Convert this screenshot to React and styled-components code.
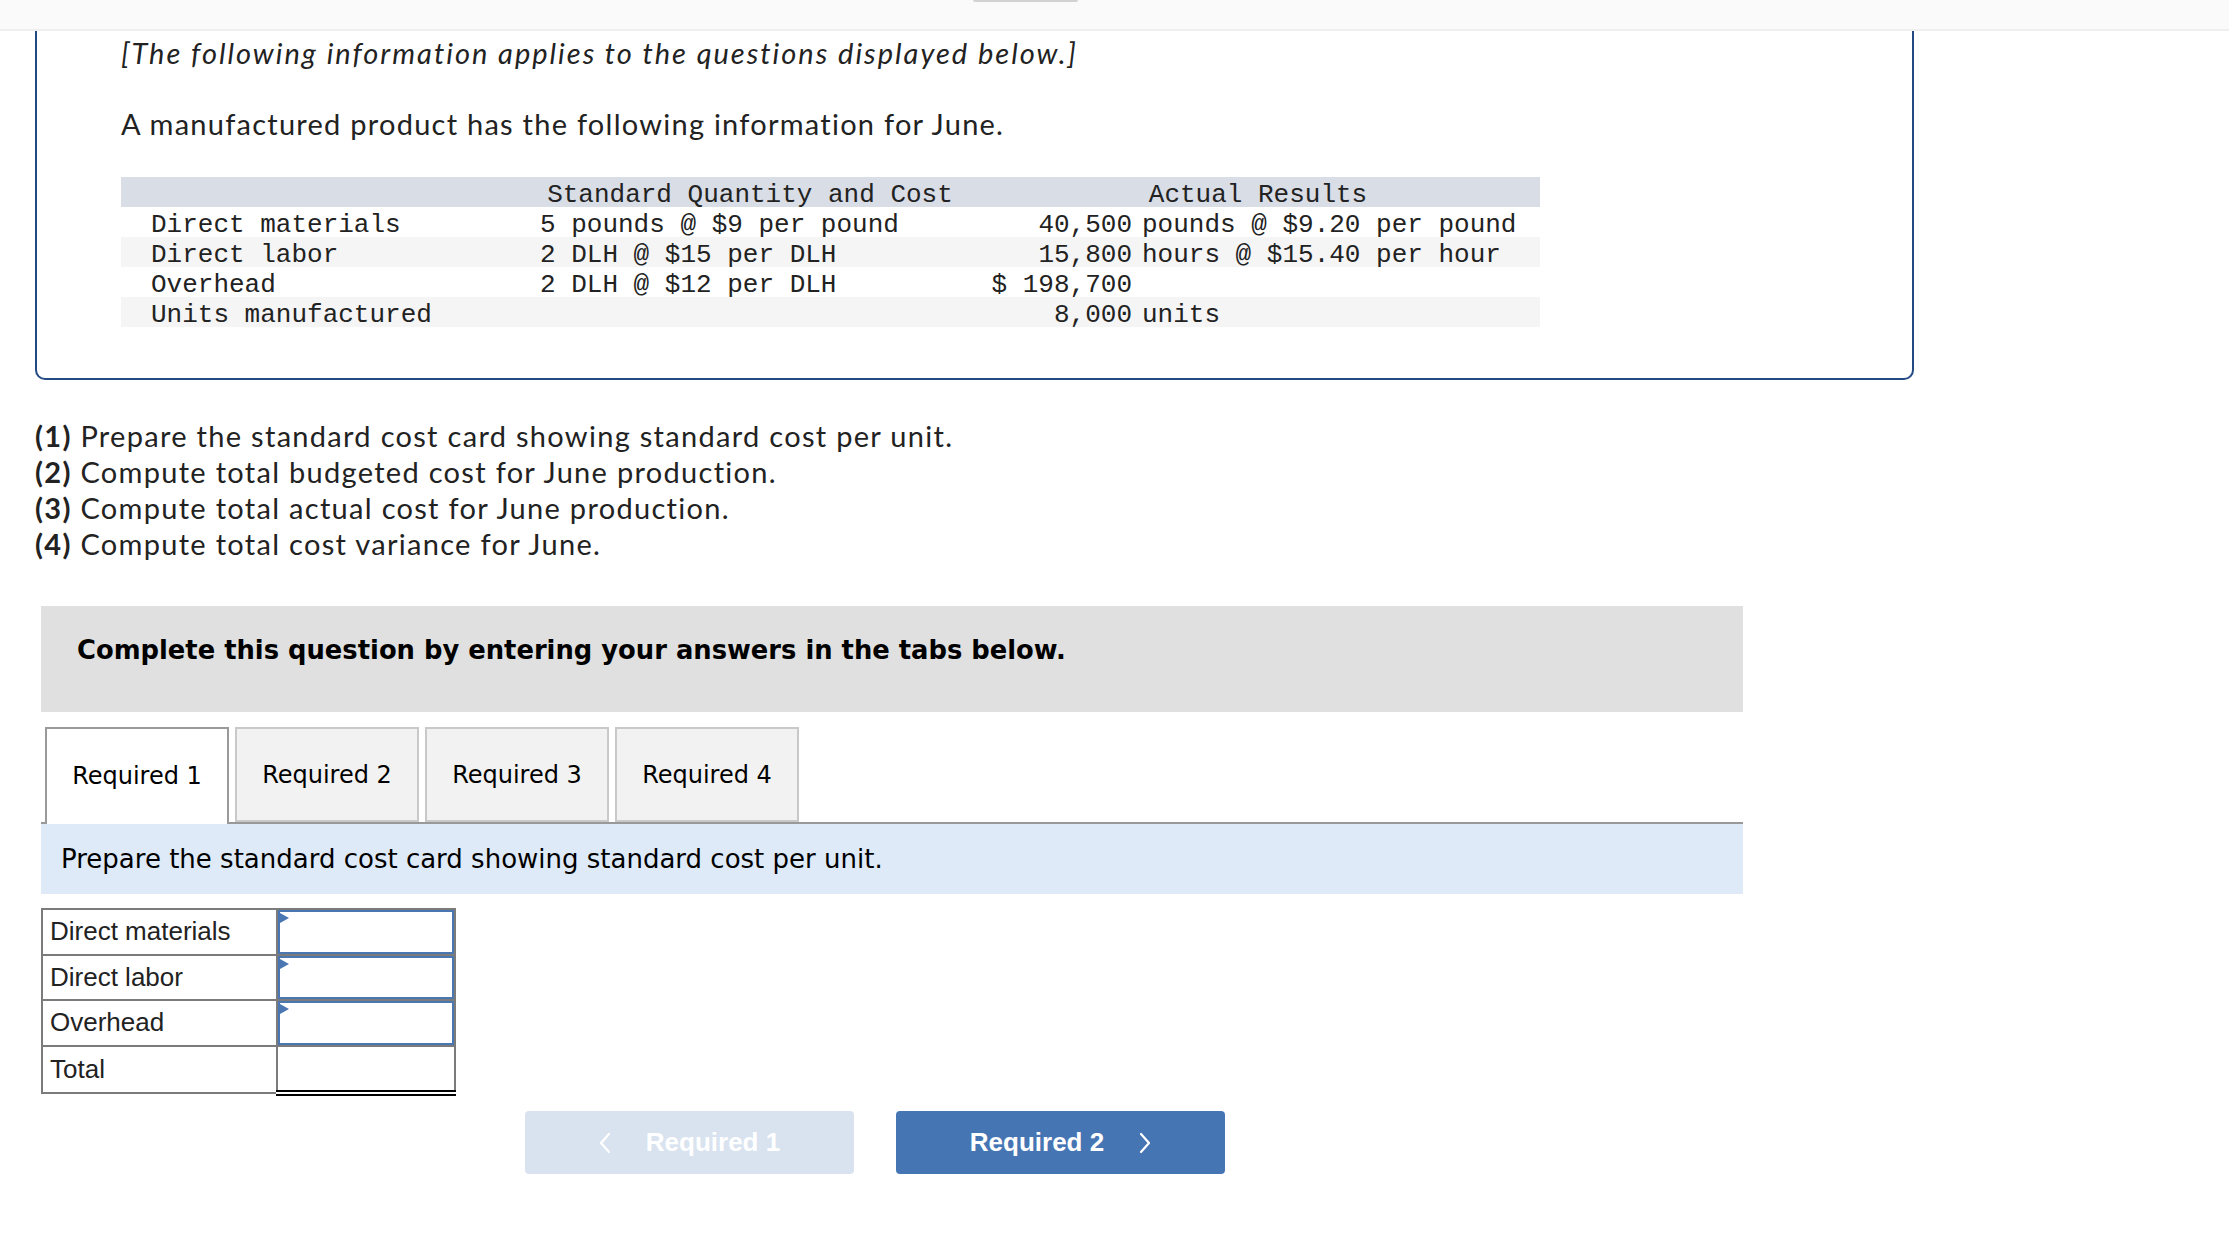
import React from 'react'
import styled, { createGlobalStyle } from 'styled-components'

const GlobalStyle = createGlobalStyle`
  html, body {
    margin: 0;
    padding: 0;
    background: #fff;
  }
  body {
    font-family: 'Lato', 'Open Sans', sans-serif;
    color: #222;
  }
`

const Page = styled.div`
  width: 2229px;
  min-height: 1240px;
`

const TopBar = styled.div`
  height: 29px;
  background: #fafafa;
  border-bottom: 2px solid #efefef;
  display: flex;
`

const Handle = styled.div`
  margin-left: 973px;
  width: 105px;
  height: 2px;
  background: #d2d2d2;
  border-radius: 0 0 4px 4px;
`

const Card = styled.div`
  margin-left: 35px;
  width: 1879px;
  box-sizing: border-box;
  border: 2px solid #244a86;
  border-top: none;
  border-radius: 0 0 10px 10px;
  padding: 4px 0 51px 84px;
`

const Note = styled.p`
  margin: 0 0 35px;
  font-size: 29px;
  line-height: 36px;
  font-style: italic;
  letter-spacing: 2px;
`

const Lead = styled.p`
  margin: 0 0 35px;
  font-size: 29px;
  line-height: 36px;
  letter-spacing: 1.25px;
`

const InfoTable = styled.table`
  border-collapse: collapse;
  width: 1419px;
  font-family: 'Liberation Mono', 'Courier New', monospace;
  font-size: 26px;
  color: #222;

  td, th {
    height: 23px;
    padding: 7px 0 0;
    line-height: 23px;
    font-weight: normal;
    white-space: pre;
  }
`

const HeadRow = styled.tr`
  background: #d9dde6;
`

const BodyRow = styled.tr`
  background: ${({ shaded }) => (shaded ? '#f5f5f5' : '#fff')};
`

const LabelCell = styled.td`
  width: 389px;
  padding-left: 30px !important;
  text-align: left;
`

const StdCell = styled.td`
  width: 420px;
  text-align: left;
`

const NumCell = styled.td`
  width: 172px;
  padding-right: 5px !important;
  text-align: right;
`

const TextCell = styled.td`
  padding-left: 5px !important;
  text-align: left;
`

const HeadCell = styled.th`
  text-align: center;
  padding-left: ${({ shift }) => shift || 0}px !important;
`

const Questions = styled.ol`
  list-style: none;
  margin: 38px 0 0;
  padding: 0 0 0 35px;
  font-size: 29px;
  line-height: 36px;
  letter-spacing: 1.3px;

  b {
    font-weight: 700;
  }
`

const Panel = styled.div`
  margin: 44px 0 0 41px;
  width: 1702px;
`

const Banner = styled.div`
  height: 106px;
  box-sizing: border-box;
  background: #e0e0e0;
  padding: 29px 36px 0;
  font-family: 'DejaVu Sans', Verdana, sans-serif;
  font-weight: bold;
  font-size: 25.8px;
  line-height: 30px;
  color: #000;
`

const TabRow = styled.div`
  margin-top: 15px;
  display: flex;
  align-items: flex-start;
  gap: 6px;
  padding-left: 4px;
  border-bottom: 2px solid #999;
  height: 95px;
`

const Tab = styled.div`
  width: 184px;
  box-sizing: border-box;
  height: ${({ active }) => (active ? 97 : 95)}px;
  padding-bottom: ${({ active }) => (active ? 2 : 0)}px;
  background: ${({ active }) => (active ? '#fff' : '#f2f2f2')};
  border: 2px solid ${({ active }) => (active ? '#9a9a9a' : '#c9c9c9')};
  border-bottom: ${({ active }) => (active ? 'none' : '2px solid #c9c9c9')};
  display: flex;
  align-items: center;
  justify-content: center;
  font-family: 'DejaVu Sans', Verdana, sans-serif;
  font-size: 24px;
  color: #000;
`

const Instruction = styled.div`
  height: 70px;
  background: #deeaf7;
  display: flex;
  align-items: center;
  padding-left: 20px;
  font-family: 'DejaVu Sans', Verdana, sans-serif;
  font-size: 26px;
  color: #000;
`

const AnswerTable = styled.table`
  margin-top: 14px;
  border-collapse: collapse;
  font-family: 'Liberation Sans', Arial, sans-serif;
  font-size: 26px;
  color: #222;

  td {
    border: 2px solid #7b7b7b;
    height: 43.5px;
    padding: 0;
  }
`

const RowLabel = styled.td`
  width: 226px;
  padding-left: 7px !important;
  line-height: 43.5px;
`

const ValueCell = styled.td`
  width: 176px;
  ${({ total }) =>
    total &&
    `
    border-top: 2px solid #000 !important;
    border-bottom: 6px double #000 !important;
  `}
`

const InputBox = styled.div`
  position: relative;
  height: 43.5px;
  box-sizing: border-box;
  border: 2px solid #4a76b2;
  background: #fff;

  &::before {
    content: '';
    position: absolute;
    left: 0;
    top: 1px;
    border-top: 5px solid transparent;
    border-bottom: 5px solid transparent;
    border-left: 9px solid #4a76b2;
  }
`

const NavRow = styled.div`
  margin-top: 15px;
  display: flex;
  gap: 42px;
  padding-left: 484px;
`

const NavButton = styled.button`
  width: 329px;
  height: 63px;
  border: none;
  border-radius: 4px;
  background: ${({ disabled }) => (disabled ? '#d9e3ef' : '#4675b4')};
  color: #fff;
  display: flex;
  align-items: center;
  justify-content: center;
  gap: 35px;
  font-family: 'Liberation Sans', Arial, sans-serif;
  font-weight: bold;
  font-size: 26px;
  padding: 0;
`

const Chevron = ({ dir }) => (
  <svg width="12" height="22" viewBox="0 0 12 22" fill="none">
    <polyline
      points={dir === 'left' ? '10,2 2,11 10,20' : '2,2 10,11 2,20'}
      stroke="#fff"
      strokeWidth="2.2"
      strokeLinecap="round"
      strokeLinejoin="round"
    />
  </svg>
)

const rows = [
  ['Direct materials', '5 pounds @ $9 per pound', '40,500', 'pounds @ $9.20 per pound'],
  ['Direct labor', '2 DLH @ $15 per DLH', '15,800', 'hours @ $15.40 per hour'],
  ['Overhead', '2 DLH @ $12 per DLH', '$ 198,700', ''],
  ['Units manufactured', '', '8,000', 'units'],
]

const questions = [
  ['(1)', 'Prepare the standard cost card showing standard cost per unit.'],
  ['(2)', 'Compute total budgeted cost for June production.'],
  ['(3)', 'Compute total actual cost for June production.'],
  ['(4)', 'Compute total cost variance for June.'],
]

const tabs = ['Required 1', 'Required 2', 'Required 3', 'Required 4']

const answers = ['Direct materials', 'Direct labor', 'Overhead']

const App = () => {
  return (
    <Page>
      <GlobalStyle />
      <TopBar>
        <Handle />
      </TopBar>

      <Card>
        <Note>[The following information applies to the questions displayed below.]</Note>
        <Lead>A manufactured product has the following information for June.</Lead>
        <InfoTable>
          <tbody>
            <HeadRow>
              <LabelCell />
              <HeadCell>Standard Quantity and Cost</HeadCell>
              <HeadCell colSpan={2} shift={16}>
                Actual Results
              </HeadCell>
            </HeadRow>
            {rows.map((r, i) => (
              <BodyRow key={r[0]} shaded={i % 2 === 1}>
                <LabelCell>{r[0]}</LabelCell>
                <StdCell>{r[1]}</StdCell>
                <NumCell>{r[2]}</NumCell>
                <TextCell>{r[3]}</TextCell>
              </BodyRow>
            ))}
          </tbody>
        </InfoTable>
      </Card>

      <Questions>
        {questions.map(([num, text]) => (
          <li key={num}>
            <b>{num}</b> {text}
          </li>
        ))}
      </Questions>

      <Panel>
        <Banner>Complete this question by entering your answers in the tabs below.</Banner>
        <TabRow>
          {tabs.map((t, i) => (
            <Tab key={t} active={i === 0}>
              {t}
            </Tab>
          ))}
        </TabRow>
        <Instruction>Prepare the standard cost card showing standard cost per unit.</Instruction>

        <AnswerTable>
          <tbody>
            {answers.map((a) => (
              <tr key={a}>
                <RowLabel>{a}</RowLabel>
                <ValueCell>
                  <InputBox />
                </ValueCell>
              </tr>
            ))}
            <tr>
              <RowLabel>Total</RowLabel>
              <ValueCell total />
            </tr>
          </tbody>
        </AnswerTable>

        <NavRow>
          <NavButton disabled>
            <Chevron dir="left" />
            Required 1
          </NavButton>
          <NavButton>
            Required 2
            <Chevron dir="right" />
          </NavButton>
        </NavRow>
      </Panel>
    </Page>
  )
}

export default App
